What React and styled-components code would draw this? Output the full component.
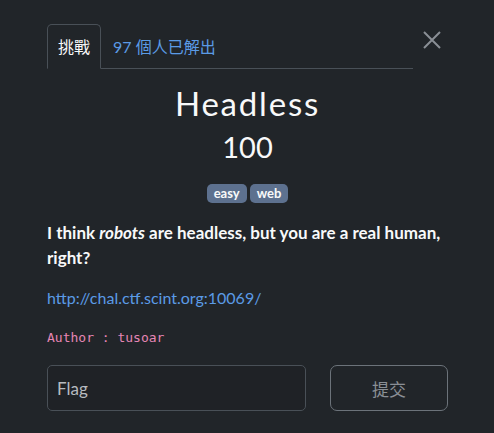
import React from 'react'
import styled, { createGlobalStyle } from 'styled-components'

const COLORS = {
  BG: '#212529',
  LIGHT: '#f8f9fa',
  BORDER: '#495057',
  LINK: '#5b9be6',
  BADGE: '#5d718f',
  PINK: '#e685b5',
  MUTED: '#8a8f95',
}

const GlobalStyle = createGlobalStyle`
  html, body {
    margin: 0;
    background: ${COLORS.BG};
  }
  body {
    font-family: Lato, "Noto Sans CJK TC", sans-serif;
    color: ${COLORS.LIGHT};
  }
`

const Modal = styled.div`
  box-sizing: border-box;
  width: 494px;
  min-height: 433px;
  padding: 24px 46px 0 47px;
  background: ${COLORS.BG};
`

const Header = styled.div`
  display: flex;
  align-items: flex-start;
`

const Tabs = styled.ul`
  display: flex;
  width: 366px;
  margin: 0;
  padding: 0;
  list-style: none;
  border-bottom: 1px solid ${COLORS.BORDER};
`

const Tab = styled.li`
  box-sizing: border-box;
  height: 45px;
  margin-bottom: -1px;
  padding: 10px ${props => (props.active ? '10px' : '11px')};
  font-size: 16px;
  line-height: 24px;
  color: ${props => (props.active ? COLORS.LIGHT : COLORS.LINK)};
  border: 1px solid ${props => (props.active ? COLORS.BORDER : 'transparent')};
  border-bottom-color: ${props => (props.active ? COLORS.BG : 'transparent')};
  border-radius: 5px 5px 0 0;
  background: ${props => (props.active ? COLORS.BG : 'transparent')};
`

const Close = styled.button`
  display: flex;
  margin: 7px 0 0 10px;
  padding: 0;
  border: 0;
  background: none;
  color: ${COLORS.MUTED};
  cursor: pointer;
`

const Title = styled.h1`
  margin: 14px 0 0;
  text-align: center;
  font-size: 33px;
  font-weight: 400;
  line-height: 40px;
  letter-spacing: 1.8px;
`

const Points = styled.h3`
  margin: 4px 0 0;
  text-align: center;
  font-size: 29px;
  font-weight: 400;
  line-height: 40px;
`

const Tags = styled.div`
  display: flex;
  justify-content: center;
  gap: 3px;
  margin-top: 17px;
`

const Badge = styled.span`
  padding: 2px 7px;
  font-size: 13px;
  line-height: 15px;
  font-weight: 700;
  color: ${COLORS.LIGHT};
  background: ${COLORS.BADGE};
  border-radius: 5px;
`

const Description = styled.div`
  margin-top: 17px;
  font-size: 17px;
  line-height: 25px;

  p {
    margin: 0 0 15px;
    font-weight: 700;
  }
  a {
    display: block;
    font-size: 16px;
    color: ${COLORS.LINK};
    text-decoration: none;
  }
  code {
    display: block;
    margin-top: 15px;
    font-family: "DejaVu Sans Mono", monospace;
    font-size: 13px;
    color: ${COLORS.PINK};
  }
`

const SubmitRow = styled.div`
  display: grid;
  grid-template-columns: 259px 118px;
  column-gap: 24px;
  margin-top: 15px;
`

const FlagInput = styled.input`
  box-sizing: border-box;
  height: 46px;
  padding: 0 9px;
  font-family: Lato, sans-serif;
  font-size: 17px;
  color: ${COLORS.LIGHT};
  background: #1f2226;
  border: 1px solid ${COLORS.BORDER};
  border-radius: 5px;
  &::placeholder {
    color: #b7bbc0;
  }
`

const SubmitButton = styled.button`
  height: 46px;
  font-family: "Noto Sans CJK TC", sans-serif;
  font-size: 17px;
  color: ${COLORS.MUTED};
  background: transparent;
  border: 1px solid #6c737a;
  border-radius: 7px;
`

const App = () => {
  return (
    <>
      <GlobalStyle />
      <Modal>
        <Header>
          <Tabs>
            <Tab active>挑戰</Tab>
            <Tab>97 個人已解出</Tab>
          </Tabs>
          <Close aria-label="close">
            <svg width="18" height="18" viewBox="0 0 18 18">
              <path d="M1 1 L17 17 M17 1 L1 17" stroke="currentColor" strokeWidth="2" />
            </svg>
          </Close>
        </Header>

        <Title>Headless</Title>
        <Points>100</Points>
        <Tags>
          <Badge>easy</Badge>
          <Badge>web</Badge>
        </Tags>

        <Description>
          <p>I think <em>robots</em> are headless, but you are a real human, right?</p>
          <a href="#">http://chal.ctf.scint.org:10069/</a>
          <code>Author : tusoar</code>
        </Description>

        <SubmitRow>
          <FlagInput placeholder="Flag" />
          <SubmitButton>提交</SubmitButton>
        </SubmitRow>
      </Modal>
    </>
  )
}

export default App
